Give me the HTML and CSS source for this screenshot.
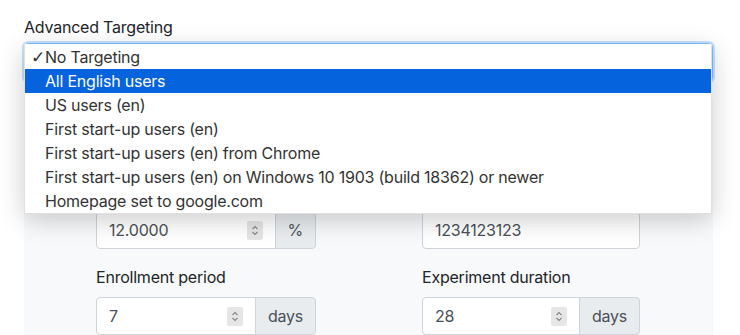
FILE: index.html
```html
<!DOCTYPE html>
<html lang="en">
<head>
    <meta charset="UTF-8">
    <meta name="viewport" content="width=device-width, initial-scale=1.0">
    <title>Experiment settings</title>
    <link rel="stylesheet" href="styles.css">
</head>
<body>
<div class="page">
    <label class="field-label" for="targeting">Advanced Targeting</label>

    <div class="select-wrap">
        <div class="select-box" id="targeting" tabindex="0"></div>

        <!-- open dropdown list -->
        <ul class="select-menu">
            <li class="option checked"><span class="check">✓</span>No Targeting</li>
            <li class="option active">All English users</li>
            <li class="option">US users (en)</li>
            <li class="option">First start-up users (en)</li>
            <li class="option">First start-up users (en) from Chrome</li>
            <li class="option">First start-up users (en) on Windows 10 1903 (build 18362) or newer</li>
            <li class="option">Homepage set to google.com</li>
        </ul>
    </div>

    <div class="panel">
        <div class="form-grid">
            <div class="form-group">
                <div class="input-group">
                    <div class="field">
                        <input type="text" value="12.0000" aria-label="Population percentage">
                        <span class="spinner">
                            <svg width="16" height="19" viewBox="0 0 16 19">
                                <path d="M5.5 8 L8 5.5 L10.5 8" fill="none" stroke="#858585" stroke-width="1.1"/>
                                <path d="M5.5 11 L8 13.5 L10.5 11" fill="none" stroke="#858585" stroke-width="1.1"/>
                            </svg>
                        </span>
                    </div>
                    <span class="addon">%</span>
                </div>
            </div>

            <div class="form-group">
                <div class="input-group">
                    <div class="field">
                        <input type="text" value="1234123123" aria-label="Randomization seed">
                    </div>
                </div>
            </div>

            <div class="form-group">
                <label class="field-label">Enrollment period</label>
                <div class="input-group">
                    <div class="field">
                        <input type="text" value="7">
                        <span class="spinner">
                            <svg width="16" height="19" viewBox="0 0 16 19">
                                <path d="M5.5 8 L8 5.5 L10.5 8" fill="none" stroke="#858585" stroke-width="1.1"/>
                                <path d="M5.5 11 L8 13.5 L10.5 11" fill="none" stroke="#858585" stroke-width="1.1"/>
                            </svg>
                        </span>
                    </div>
                    <span class="addon">days</span>
                </div>
            </div>

            <div class="form-group">
                <label class="field-label">Experiment duration</label>
                <div class="input-group">
                    <div class="field">
                        <input type="text" value="28">
                        <span class="spinner">
                            <svg width="16" height="19" viewBox="0 0 16 19">
                                <path d="M5.5 8 L8 5.5 L10.5 8" fill="none" stroke="#858585" stroke-width="1.1"/>
                                <path d="M5.5 11 L8 13.5 L10.5 11" fill="none" stroke="#858585" stroke-width="1.1"/>
                            </svg>
                        </span>
                    </div>
                    <span class="addon">days</span>
                </div>
            </div>
        </div>
    </div>
</div>
</body>
</html>
```

FILE: styles.css
```css
* {
    margin: 0;
    padding: 0;
    box-sizing: border-box;
}

body {
    font-family: Inter, 'Liberation Sans', sans-serif;
    font-size: 16px;
    line-height: 24px;
    letter-spacing: -0.22px;
    color: #212529;
    background: #fff;
    overflow: hidden;
}

.page {
    padding: 15px 27px 0 24px;
}

.field-label {
    display: block;
    margin-bottom: 4px;
}

/* select with its open list */
.select-wrap {
    position: relative;
}

.select-box {
    height: 38px;
    border: 1px solid #80bdff;
    border-radius: 4px;
    background: #fff;
    box-shadow: 0 0 0 2px rgba(0, 123, 255, 0.22);
    outline: none;
}

.select-menu {
    position: absolute;
    top: 1px;
    left: 0;
    right: 1px;
    z-index: 10;
    list-style: none;
    background: #fff;
    border: 1px solid rgba(0, 0, 0, 0.12);
    border-top: none;
    padding-top: 1px;
    box-shadow: 0 6px 24px rgba(0, 0, 0, 0.2);
}

.option {
    height: 24px;
    line-height: 24px;
    padding-left: 20px;
    color: #333;
    white-space: nowrap;
    position: relative;
}

.option .check {
    position: absolute;
    left: 6px;
    font-family: 'DejaVu Sans', sans-serif;
    font-size: 17px;
}

.option.active {
    background: #0563de;
    color: #fff;
}

/* grey settings panel */
.panel {
    margin-top: 18px;
    background: #f8f9fa;
    padding: 112px 0 40px 72px;
}

.form-grid {
    display: grid;
    grid-template-columns: 220px 218px;
    column-gap: 106px;
}

.form-group {
    margin-bottom: 16px;
}

.form-group .field-label {
    margin-bottom: 8px;
}

.input-group {
    display: flex;
    height: 38px;
}

.field {
    flex: 1;
    display: flex;
    align-items: center;
    background: #fff;
    border: 1px solid #ced4da;
    border-radius: 4px;
    padding: 0 12px;
    min-width: 0;
}

.field:not(:last-child) {
    border-top-right-radius: 0;
    border-bottom-right-radius: 0;
}

.field input {
    flex: 1;
    min-width: 0;
    border: none;
    outline: none;
    background: transparent;
    font: inherit;
    letter-spacing: inherit;
    color: #495057;
}

.spinner {
    display: flex;
    background: #e6e6e6;
    border-radius: 2px;
}

.addon {
    display: flex;
    align-items: center;
    padding: 0 12px;
    margin-left: -1px;
    background: #e9ecef;
    border: 1px solid #ced4da;
    border-radius: 0 4px 4px 0;
    color: #495057;
}
```
